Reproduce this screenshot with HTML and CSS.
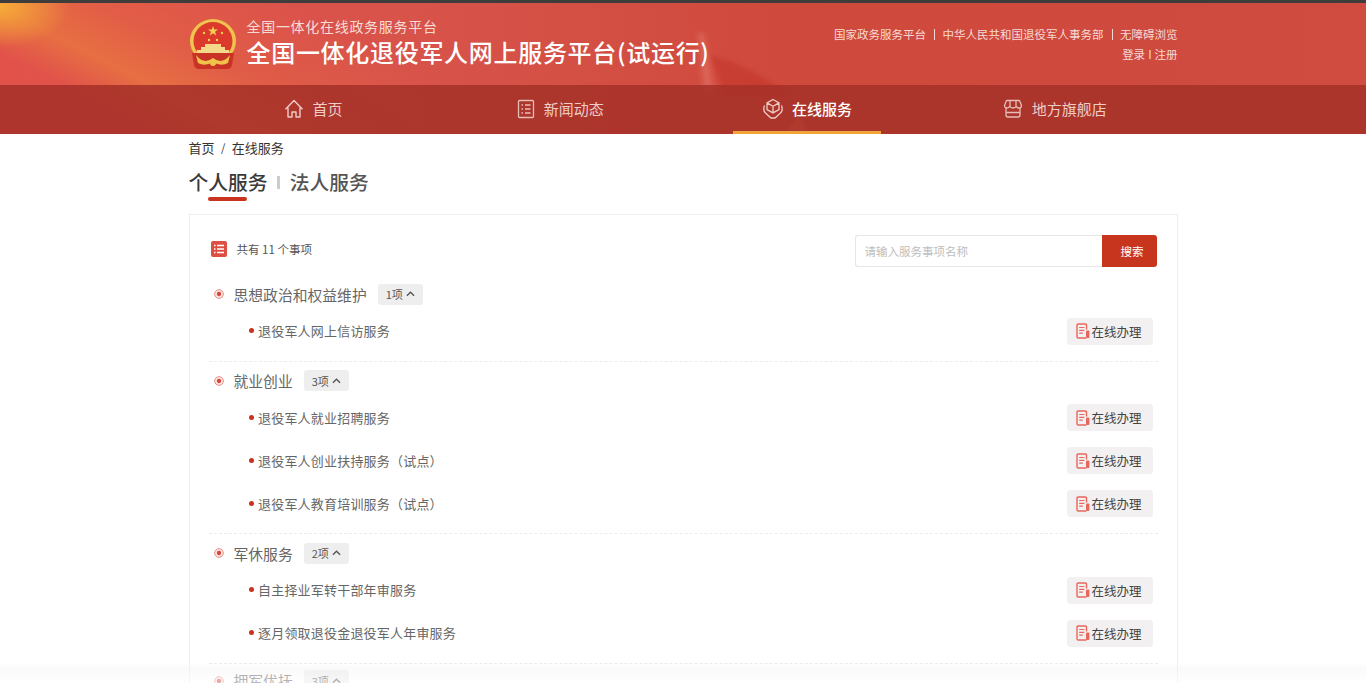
FILE: index.html
```html
<!DOCTYPE html>
<html lang="zh-CN">
<head>
<meta charset="utf-8">
<title>全国一体化退役军人网上服务平台</title>
<link rel="stylesheet" href="styles.css">
</head>
<body>
<svg class="defs" width="0" height="0" aria-hidden="true">
  <symbol id="doc" viewBox="0 0 14 16">
    <path d="M10.500 6.500V2.200c0-.7-.5-1.200-1.200-1.200H2.200C1.500 1 1 1.500 1 2.200v11.600c0 .7.500 1.200 1.200 1.200h8.300" fill="none" stroke="#e8675c" stroke-width="1.400"/>
    <path d="M3.200 4.500h5.200M3.200 7.300h5.200M3.200 10.100h3.600" fill="none" stroke="#e8675c" stroke-width="1.200"/>
    <rect x="10" y="7.500" width="3.400" height="7.500" rx="1" fill="#e8675c"/>
  </symbol>
  <symbol id="bullet" viewBox="0 0 12 12">
    <circle cx="6" cy="6" r="5.200" fill="#fbe5e2" stroke="#e98d84" stroke-width="1.200"/>
    <circle cx="6" cy="6" r="2.600" fill="#d5473a"/>
  </symbol>
  <symbol id="chev" viewBox="0 0 10 6">
    <path d="M1 5l4-4 4 4" fill="none" stroke="#555" stroke-width="1.500"/>
  </symbol>
</svg>

<div class="topline"></div>
<header class="hero">
  <svg class="ribbon" viewBox="0 0 140 131" width="140" height="131" aria-hidden="true">
    <defs>
      <filter id="soft"><feGaussianBlur stdDeviation="2.500"/></filter>
    </defs>
    <g filter="url(#soft)">
      <path d="M18 30 L 24 30 L 34 90 L 24 90 Z" fill="#e9857a" opacity=".4"/>
      <path d="M30 52 Q 70 62 110 92 L 45 92 Z" fill="#c5342a" opacity=".65"/>
      <path d="M106 131 L 118 112 L 130 131 Z" fill="#f08050" opacity=".9"/>
    </g>
  </svg>
  <div class="wrap brand-row">
    <div class="brand">
      <svg class="emblem" viewBox="0 0 48 52" width="48" height="52" aria-hidden="true">
        <ellipse cx="24" cy="22" rx="23" ry="22" fill="#efc34e"/>
        <ellipse cx="24" cy="22" rx="19.500" ry="19" fill="#dc3a2c"/>
        <path d="M24 7l1.200 3.600H29l-3 2.200 1.200 3.600-3.200-2.200-3.200 2.200 1.200-3.600-3-2.200h3.800z" fill="#f4cf58"/>
        <circle cx="15" cy="14" r="1.200" fill="#f4cf58"/><circle cx="33" cy="14" r="1.200" fill="#f4cf58"/>
        <circle cx="20" cy="21" r="1.200" fill="#f4cf58"/><circle cx="28" cy="21" r="1.200" fill="#f4cf58"/>
        <path d="M8 31h32v3H8zM12 28h24v3H12zM16 25h16v3H16z" fill="#f3d88a"/>
        <path d="M3 34h42l-2 12q-1 4-5 4H10q-4 0-5-4z" fill="#c93326"/>
        <path d="M7 36q8 10 17 3 9 7 17-3l-2 8q-7 4-15-1-8 5-15 1z" fill="#efc24a"/>
        <circle cx="24" cy="44" r="3" fill="#efc24a"/>
      </svg>
      <div class="brand-text">
        <div class="brand-sub">全国一体化在线政务服务平台</div>
        <div class="brand-title">全国一体化退役军人网上服务平台(试运行)</div>
      </div>
    </div>
    <div class="links">
      <div class="links-row">
        <a>国家政务服务平台</a><i></i><a>中华人民共和国退役军人事务部</a><i></i><a>无障碍浏览</a>
      </div>
      <div class="links-row login"><a>登录</a><span class="bar">I</span><a>注册</a></div>
    </div>
  </div>
  <nav class="nav">
    <div class="wrap nav-row">
      <a class="nav-item">
        <svg viewBox="0 0 20 20" width="20" height="20" class="nav-icon"><path d="M1.500 10.200L10 1.500l8.500 8.700M4 8.500v9.500h4v-5h4v5h4V8.500" fill="none" stroke="#f0cbc6" stroke-width="1.400" stroke-linejoin="round"/></svg>
        <span>首页</span>
      </a>
      <a class="nav-item">
        <svg viewBox="0 0 18 20" width="18" height="20" class="nav-icon"><rect x="1.500" y="1.500" width="15" height="17" rx="1" fill="none" stroke="#e8bdb8" stroke-width="1.300"/><path d="M4.500 6h1.500M8 6h5.500M4.500 10h1.500M8 10h5.500M4.500 14h1.500M8 14h5.500" stroke="#e8bdb8" stroke-width="1.300"/></svg>
        <span>新闻动态</span>
      </a>
      <a class="nav-item active">
        <svg viewBox="0 0 22 22" width="22" height="22" class="nav-icon"><path d="M11 1.500l6 3.400v6.600l-6 3.400-6-3.400V4.900zM5 4.900l6 3.400 6-3.400M11 8.300v6.600" fill="none" stroke="#f0cbc6" stroke-width="1.300"/><path d="M2.500 7.500Q.5 13 4 15.500l5 4.500h4l5-4.500Q21.500 13 19.500 7.500" fill="none" stroke="#f0cbc6" stroke-width="1.300"/></svg>
        <span>在线服务</span>
      </a>
      <a class="nav-item">
        <svg viewBox="0 0 20 20" width="20" height="20" class="nav-icon"><path d="M3.500 1.500h13l2 5q0 2.500-2.500 2.500-2 0-2.700-1.700Q12.600 9 10 9t-3.300-1.700Q6 9 4 9 1.500 9 1.500 6.500zM7 2v5M13 2v5M3 9v7q0 2 2 2h10q2 0 2-2V9M3 13.500h14" fill="none" stroke="#e8bdb8" stroke-width="1.300" stroke-linejoin="round"/></svg>
        <span>地方旗舰店</span>
      </a>
    </div>
  </nav>
</header>

<main class="wrap">
  <div class="crumbs"><a>首页</a><span class="slash">/</span><a>在线服务</a></div>
  <div class="tabs">
    <a class="tab current">个人服务</a><i class="tab-sep"></i><a class="tab">法人服务</a>
  </div>

  <section class="card">
    <div class="toolbar">
      <div class="count">
        <svg viewBox="0 0 16 16" width="16" height="16"><rect width="16" height="16" rx="2" fill="#dc4f42"/><path d="M3 4.500h1.500M6 4.500h7M3 8h1.500M6 8h7M3 11.500h1.500M6 11.500h7" stroke="#fff" stroke-width="1.300"/></svg>
        <span>共有 11 个事项</span>
      </div>
      <div class="search">
        <input class="search-input" type="text" placeholder="请输入服务事项名称">
        <button class="search-btn">搜索</button>
      </div>
    </div>

    <div class="group">
      <div class="group-head">
        <svg class="bullet"><use href="#bullet"/></svg>
        <span class="group-name">思想政治和权益维护</span>
        <span class="badge">1项<svg class="chev"><use href="#chev"/></svg></span>
      </div>
      <div class="row"><span class="row-name">退役军人网上信访服务</span><a class="go"><svg class="go-icon"><use href="#doc"/></svg>在线办理</a></div>
    </div>

    <div class="group">
      <div class="group-head">
        <svg class="bullet"><use href="#bullet"/></svg>
        <span class="group-name">就业创业</span>
        <span class="badge">3项<svg class="chev"><use href="#chev"/></svg></span>
      </div>
      <div class="row"><span class="row-name">退役军人就业招聘服务</span><a class="go"><svg class="go-icon"><use href="#doc"/></svg>在线办理</a></div>
      <div class="row"><span class="row-name">退役军人创业扶持服务（试点）</span><a class="go"><svg class="go-icon"><use href="#doc"/></svg>在线办理</a></div>
      <div class="row"><span class="row-name">退役军人教育培训服务（试点）</span><a class="go"><svg class="go-icon"><use href="#doc"/></svg>在线办理</a></div>
    </div>

    <div class="group">
      <div class="group-head">
        <svg class="bullet"><use href="#bullet"/></svg>
        <span class="group-name">军休服务</span>
        <span class="badge">2项<svg class="chev"><use href="#chev"/></svg></span>
      </div>
      <div class="row"><span class="row-name">自主择业军转干部年审服务</span><a class="go"><svg class="go-icon"><use href="#doc"/></svg>在线办理</a></div>
      <div class="row"><span class="row-name">逐月领取退役金退役军人年审服务</span><a class="go"><svg class="go-icon"><use href="#doc"/></svg>在线办理</a></div>
    </div>

    <div class="group">
      <div class="group-head last-head">
        <svg class="bullet"><use href="#bullet"/></svg>
        <span class="group-name">拥军优抚</span>
        <span class="badge">3项<svg class="chev"><use href="#chev"/></svg></span>
      </div>
    </div>
  </section>
</main>
<div class="fade"></div>
</body>
</html>
```

FILE: styles.css
```css
* { box-sizing: border-box; }
html, body { height: 683px; overflow: hidden; }
body {
  margin: 0;
  background: #fff;
  color: #333;
  font-family: "Noto Sans CJK SC", "Liberation Sans", sans-serif;
}
a { color: inherit; text-decoration: none; }
.defs { position: absolute; }
.wrap { width: 989px; margin: 0 auto; }

.topline { height: 3px; background: #3f3d3c; }

.hero {
  position: relative;
  height: 131px;
  overflow: hidden;
  background:
    radial-gradient(72px 42px at 0 3px, rgba(246,172,56,1), rgba(246,172,56,0)),
    linear-gradient(26.600deg, rgba(232,112,65,0) 72px, rgba(232,116,65,.85) 112px, rgba(232,112,65,.35) 160px, rgba(232,112,65,0) 240px),
    linear-gradient(90deg, #e2524a 0, #d8534a 400px, #cf4a3c 800px, #d04b40 1366px);
}
.ribbon { position: absolute; left: 680px; top: 0; }

.brand-row {
  position: relative;
  height: 82px;
  display: flex;
  justify-content: space-between;
}
.brand { display: flex; align-items: flex-start; padding-top: 15px; }
.emblem { margin-right: 10px; margin-top: 1px; }
.brand-text { color: #fff; margin-top: -1px; }
.brand-sub {
  font-size: 14px;
  line-height: 18px;
  letter-spacing: .7px;
  color: #f6dcd8;
  white-space: nowrap;
}
.brand-title {
  font-size: 24px;
  line-height: 34px;
  font-weight: 500;
  letter-spacing: .7px;
  white-space: nowrap;
}
.links {
  padding-top: 22px;
  font-size: 11.500px;
  line-height: 19px;
  color: #f7d9d5;
  text-align: right;
}
.links-row { display: flex; justify-content: flex-end; align-items: center; height: 19px; }
.links-row i {
  width: 1px;
  height: 11px;
  margin: 0 7.500px 0 8px;
  background: #f7d9d5;
}
.login { margin-top: 1px; }
.bar { margin: 0 3px; }

.nav { position: relative; height: 49px; background: rgba(165, 48, 40, .85); }
.nav-row { display: grid; grid-template-columns: repeat(4, 1fr); height: 49px; }
.nav-item {
  display: flex;
  align-items: center;
  justify-content: center;
  gap: 9px;
  width: 148px;
  padding-left: 2px;
  justify-self: center;
  height: 49px;
  font-size: 15px;
  color: #eeccc8;
}
.nav-icon { flex: none; margin-top: -2px; }
.nav-item span { margin-top: -3px; }
.nav-item.active {
  color: #fff;
  font-weight: 500;
  gap: 8px;
  padding-left: 1px;
  border-bottom: 3px solid #f0a43c;
  padding-top: 3px;
}

.crumbs {
  display: flex;
  align-items: center;
  height: 28px;
  margin-top: -1px;
  font-size: 13px;
  color: #333;
}
.slash { margin: 0 6.500px 0 6.500px; font-size: 11px; }

.tabs {
  display: flex;
  align-items: center;
  height: 34px;
  margin-top: 4px;
}
.tab {
  position: relative;
  font-size: 19.800px;
  line-height: 34px;
  font-weight: 500;
  color: #555;
}
.tab.current { color: #3a3a3a; }
.tab.current::after {
  content: "";
  position: absolute;
  left: 19px;
  width: 39px;
  bottom: -2px;
  height: 4px;
  border-radius: 2px;
  background: #c8321f;
}
.tab-sep { width: 3px; height: 13px; background: #ccc; margin: 0 10px 0 9px; }

.card {
  margin-top: 15px;
  height: 600px;
  border: 1px solid #eeeeee;
  padding: 20px 19px 0;
}
.toolbar { display: flex; justify-content: space-between; align-items: center; height: 32px; margin-bottom: 16px; }
.count { display: flex; align-items: center; gap: 10px; padding-left: 2px; font-size: 11.500px; color: #555; margin-top: -4px; }
.search { display: flex; height: 32px; margin-right: 1px; }
.search-input {
  width: 247px;
  height: 32px;
  padding: 0 9px;
  border: 1px solid #e6e6e6;
  border-right: 0;
  border-radius: 3px 0 0 3px;
  font: 11.500px "Noto Sans CJK SC", sans-serif;
  outline: 0;
}
.search-input::placeholder { color: #bdbdbd; }
.search-btn {
  width: 55px;
  height: 32px;
  padding: 0 0 0 6px;
  border: 0;
  border-radius: 0 3px 3px 0;
  background: #c8351f;
  color: #fff;
  font: 11.500px "Noto Sans CJK SC", sans-serif;
}

.group { padding-bottom: 8.500px; border-bottom: 1px dashed #ececec; }
.group:last-child { border-bottom: 0; }
.group-head {
  display: flex;
  align-items: center;
  height: 22px;
  margin-top: 8px;
  margin-bottom: 4px;
  padding-left: 5px;
}
.last-head { margin-top: 6px; }
.bullet { width: 10px; height: 10px; margin-right: 10px; flex: none; }
.group-name { font-size: 14.800px; color: #666; margin-right: 11px; }
.badge {
  display: flex;
  align-items: center;
  justify-content: center;
  gap: 3px;
  width: 45px;
  height: 21px;
  border-radius: 3px;
  background: #eeeeee;
  font-size: 11px;
  color: #555;
}
.chev { width: 9px; height: 6px; }

.row {
  position: relative;
  display: flex;
  align-items: center;
  justify-content: space-between;
  height: 43px;
  padding: 0 5px 0 49.500px;
}
.row::before {
  content: "";
  position: absolute;
  left: 40px;
  top: 19px;
  width: 5px;
  height: 5px;
  border-radius: 50%;
  background: #c8321f;
}
.row-name { font-size: 13px; letter-spacing: .2px; color: #666; }
.go {
  display: flex;
  align-items: center;
  width: 86px;
  height: 27px;
  margin-top: 1px;
  padding-left: 9px;
  border-radius: 4px;
  background: #f2f0f0;
  font-size: 12.500px;
  color: #444;
}
.go-icon { width: 14px; height: 16px; margin-right: 2px; flex: none; }

.fade {
  position: fixed;
  left: 0;
  right: 0;
  bottom: 0;
  height: 20px;
  background: linear-gradient(rgba(238,238,238,0), rgba(244,244,244,.45) 25%, rgba(255,255,255,.55));
  pointer-events: none;
}
```
